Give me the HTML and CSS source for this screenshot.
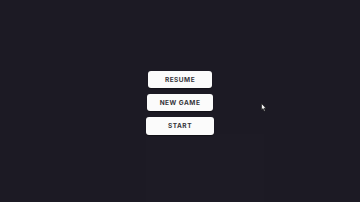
FILE: index.html
```html
<!DOCTYPE html>
<html>
  <head>
    <meta charset="utf-8">
    <title>Menu</title>
    <link rel="stylesheet" href="styles.css">
  </head>
  <body>
    <main class="screen">
      <nav class="menu">
        <button class="btn btn-resume">RESUME</button>
        <button class="btn btn-new">NEW GAME</button>
        <button class="btn btn-start">START</button>
      </nav>
      <div class="glow"></div>
      <svg class="cursor" width="6" height="9" viewBox="0 0 6 9">
        <path d="M0.5 0.5 L0.5 7 L2 5.6 L3.2 8.2 L4.2 7.8 L3 5.2 L5 5.2 Z" fill="#f4f4f4" stroke="#111" stroke-width="0.6"/>
      </svg>
    </main>
  </body>
</html>
```

FILE: styles.css
```css
html, body {
    margin: 0;
    padding: 0;
    background: #1c1a24;
}
.screen {
    position: relative;
    width: 360px;
    height: 202px;
    overflow: hidden;
}
.menu {
    display: flex;
    flex-direction: column;
    align-items: center;
    gap: 6px;
    padding-top: 71px;
    position: relative;
    z-index: 1;
}
.btn {
    height: 17px;
    border: none;
    border-radius: 3px;
    background: #fbfbfb;
    color: #35343a;
    font-family: "Inter", "Liberation Sans", sans-serif;
    font-weight: 700;
    font-size: 6.5px;
    letter-spacing: 0.5px;
    padding: 0;
    box-shadow: 0 1px 1px rgba(0, 0, 0, 0.4);
}
.btn-resume {
    width: 64px;
}
.btn-new {
    width: 66px;
}
.btn-start {
    width: 68px;
    height: 18px;
}
.glow {
    position: absolute;
    left: 146px;
    top: 134px;
    width: 118px;
    height: 68px;
    background: rgba(255, 255, 255, 0.006);
}
.cursor {
    position: absolute;
    left: 261px;
    top: 103px;
}
```
